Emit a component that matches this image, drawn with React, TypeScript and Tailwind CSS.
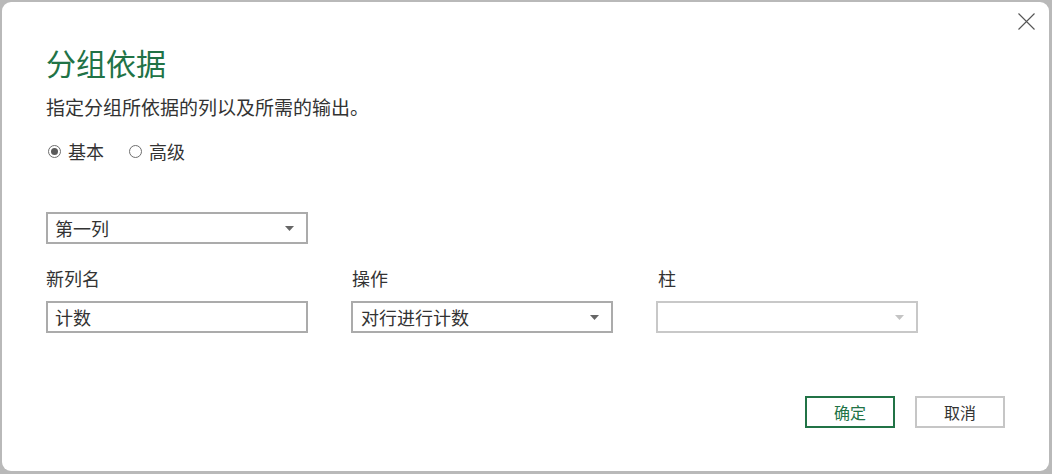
import React from "react";

const font = { fontFamily: '"Noto Sans CJK SC", "Noto Sans", sans-serif' };

function Arrow({ disabled }: { disabled?: boolean }) {
  return (
    <svg width="9" height="5" viewBox="0 0 9 5" className="shrink-0">
      <path d="M0 0 L9 0 L4.5 5 Z" fill={disabled ? "#c4c4c4" : "#666666"} />
    </svg>
  );
}

function Radio({ checked, label }: { checked?: boolean; label: string }) {
  return (
    <div className="flex items-center gap-[7px]">
      <div className="w-[13px] h-[13px] rounded-full border border-[#6e6e6e] flex items-center justify-center bg-white">
        {checked && <div className="w-[7px] h-[7px] rounded-full bg-[#5a5a5a]" />}
      </div>
      <span className="text-[18px] leading-[24px] text-[#333]">{label}</span>
    </div>
  );
}

export default function App() {
  return (
    <div className="w-[1052px] h-[474px] bg-[#b9b9b9] pt-[2px] pl-[2px] pr-[3px] pb-[3px]" style={font}>
      <div className="relative w-full h-full bg-white rounded-[9px] pt-[42px] px-[44px] flex flex-col">
        <svg className="absolute right-[14px] top-[11px]" width="17" height="17" viewBox="0 0 17 17">
          <path d="M0.5 0.5 L16.5 16.5 M16.5 0.5 L0.5 16.5" stroke="#555" strokeWidth="1.1" />
        </svg>
        <h1 className="text-[30px] leading-[36px] text-[#217346] font-normal">分组依据</h1>
        <p className="mt-[15px] text-[19px] leading-[24px] text-[#333]">指定分组所依据的列以及所需的输出。</p>
        <div className="mt-[20px] flex items-center gap-[25px] pl-[2px]">
          <Radio checked label="基本" />
          <Radio label="高级" />
        </div>
        <div className="mt-[49px] w-[262px] h-[32px] border-2 border-[#ababab] flex items-center justify-between pl-[7px] pr-[12px]">
          <span className="text-[18px] leading-[24px] text-[#333]">第一列</span>
          <Arrow />
        </div>
        <div className="mt-[22px] grid grid-cols-[262px_262px_262px] gap-x-[43px]">
          <span className="text-[18px] leading-[24px] text-[#333]">新列名</span>
          <span className="text-[18px] leading-[24px] text-[#333] pl-[1px]">操作</span>
          <span className="text-[18px] leading-[24px] text-[#333] pl-[2px]">柱</span>
          <div className="mt-[11px] h-[32px] border-2 border-[#ababab] flex items-center pl-[7px]">
            <span className="text-[18px] leading-[24px] text-[#333]">计数</span>
          </div>
          <div className="mt-[11px] h-[32px] border-2 border-[#ababab] flex items-center justify-between pl-[8px] pr-[12px]">
            <span className="text-[18px] leading-[24px] text-[#333]">对行进行计数</span>
            <Arrow />
          </div>
          <div className="mt-[11px] h-[32px] border-2 border-[#c8c8c8] flex items-center justify-end pr-[12px]">
            <Arrow disabled />
          </div>
        </div>
        <div className="mt-[63px] flex justify-end gap-[20px]">
          <button className="w-[90px] h-[32px] border-2 border-[#217346] text-[16px] text-[#217346] bg-white">确定</button>
          <button className="w-[90px] h-[32px] border-2 border-[#c6c6c6] text-[16px] text-[#333] bg-white">取消</button>
        </div>
      </div>
    </div>
  );
}
